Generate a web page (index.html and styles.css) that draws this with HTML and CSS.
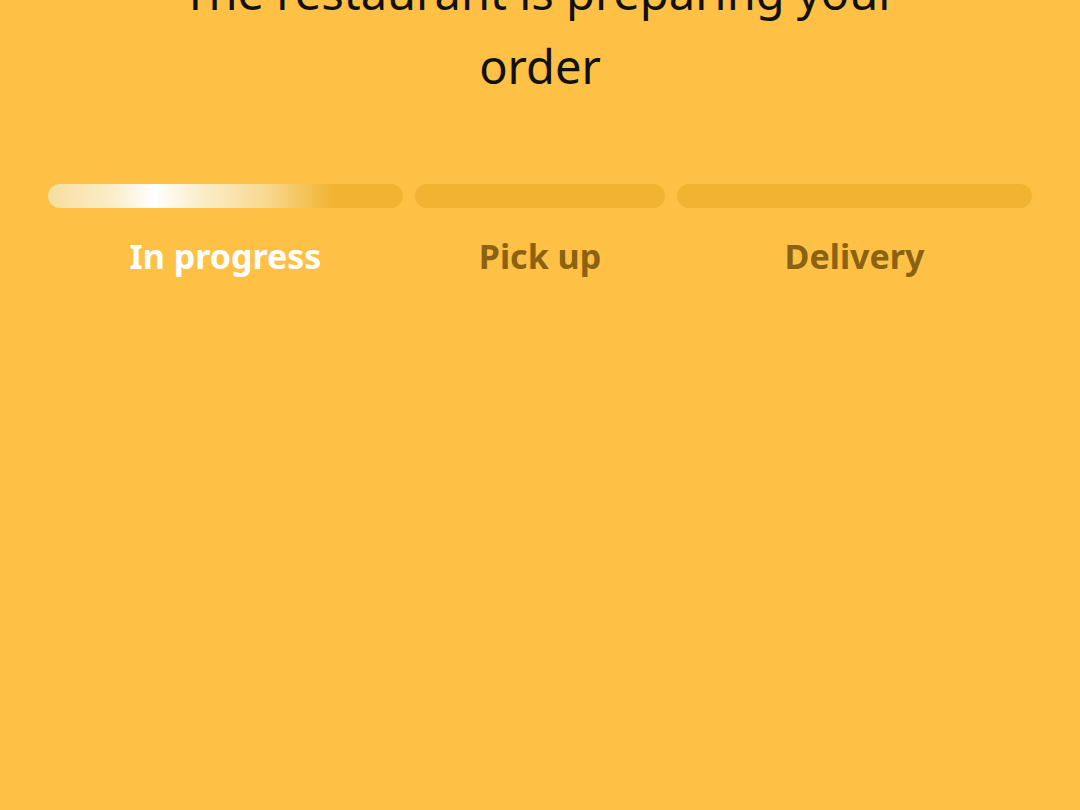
FILE: index.html
```html
<!DOCTYPE html>
<html>
<head>
<meta charset="utf-8">
<link rel="stylesheet" href="styles.css">
</head>
<body>
<main class="screen">
  <h1 class="title">The restaurant is preparing your order</h1>
  <div class="steps">
    <div class="step step-wide">
      <div class="bar bar-active"></div>
      <div class="label label-active">In progress</div>
    </div>
    <div class="step step-narrow">
      <div class="bar"></div>
      <div class="label">Pick up</div>
    </div>
    <div class="step step-wide">
      <div class="bar"></div>
      <div class="label">Delivery</div>
    </div>
  </div>
</main>
</body>
</html>
```
FILE: styles.css
```css
html, body {
  margin: 0;
  padding: 0;
  background: #FFC145;
}
.screen {
  width: 1080px;
  height: 810px;
  overflow: hidden;
  background: #FFC145;
  font-family: "Noto Sans", "Open Sans", sans-serif;
}
.title {
  margin: -45px auto 0;
  width: 780px;
  text-align: center;
  font-weight: 400;
  font-size: 47px;
  line-height: 74px;
  color: #111;
}
.steps {
  display: flex;
  gap: 12px;
  padding: 0 48px;
  margin-top: 81px;
}
.step {
  display: flex;
  flex-direction: column;
  align-items: center;
}
.step-wide { width: 355px; }
.step-narrow { width: 250px; }
.bar {
  width: 100%;
  height: 24px;
  border-radius: 12px;
  background: #F2B332;
}
.bar-active {
  background: linear-gradient(90deg, #F6DE9E 0%, #FBEDC8 18%, #FFFFFF 30%, #FBEBC4 45%, #F7D88E 62%, #F2B332 80%, #F2B332 100%);
}
.label {
  margin-top: 26px;
  font-size: 34px;
  font-weight: 700;
  line-height: 44px;
  color: #8A6212;
}
.label-active {
  color: #FFFFFF;
}
```
